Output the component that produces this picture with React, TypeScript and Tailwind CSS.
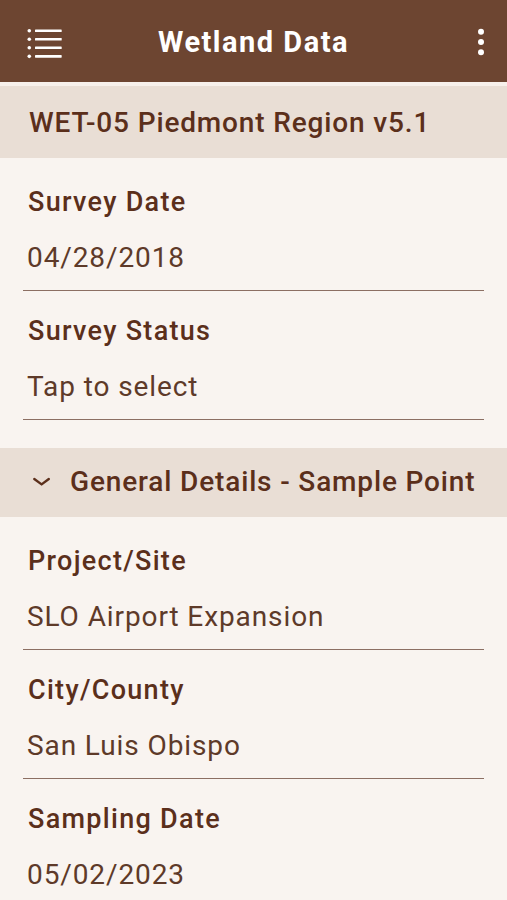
import React from "react";

function MenuIcon() {
  return (
    <svg width="40" height="34" viewBox="0 0 40 34" className="block">
      {[0, 1, 2, 3].map((i) => (
        <g key={i}>
          <circle cx="3.3" cy={4.7 + i * 8.55} r="1.8" fill="#ffffff" />
          <rect x="9" y={3.4 + i * 8.55} width="26.7" height="2.6" rx="0.6" fill="#ffffff" />
        </g>
      ))}
    </svg>
  );
}

function KebabIcon() {
  return (
    <svg width="12" height="34" viewBox="0 0 12 34" className="block">
      <circle cx="6" cy="5.7" r="3" fill="#ffffff" />
      <circle cx="6" cy="16" r="3" fill="#ffffff" />
      <circle cx="6" cy="26.3" r="3" fill="#ffffff" />
    </svg>
  );
}

function Chevron() {
  return (
    <svg width="20" height="12" viewBox="0 0 20 12" className="block">
      <polyline
        points="2.3,3 9.6,8.4 16.8,3"
        fill="none"
        stroke="#5b2f1b"
        strokeWidth="2.4"
        strokeLinecap="round"
        strokeLinejoin="round"
      />
    </svg>
  );
}

function Field({
  label,
  value,
  first,
  last,
}: {
  label: string;
  value: string;
  first?: boolean;
  last?: boolean;
}) {
  return (
    <div
      className={`mx-[23px] pl-[5px] ${first ? "pt-[28px]" : "pt-[24px]"} ${
        last ? "" : "pb-[15px] border-b-[1.5px] border-[#8c6f63]"
      }`}
    >
      <div className="text-[27px] leading-[32px] font-medium tracking-[1.3px] text-[#5b2f1b]">{label}</div>
      <div className="mt-[23px] text-[28px] leading-[34px] font-normal tracking-[0.9px] text-[#5e3a29] -ml-[1px]">
        {value}
      </div>
    </div>
  );
}

export default function App() {
  return (
    <div
      className="w-[507px] h-[900px] overflow-hidden bg-[#f9f4f0]"
      style={{ fontFamily: "Roboto, 'Noto Sans', sans-serif" }}
    >
      <header className="h-[82px] pt-[4px] bg-[#6d4531] flex items-center justify-between">
        <div className="w-[80px] pl-[26px]">
          <MenuIcon />
        </div>
        <h1 className="text-[29px] font-bold text-white tracking-[1.5px]">Wetland Data</h1>
        <div className="w-[80px] flex justify-end pr-[20px]">
          <KebabIcon />
        </div>
      </header>
      <div className="h-[4px] bg-[#f7f0eb]" />
      <div className="h-[72px] pt-[2px] bg-[#e9ded5] flex items-center pl-[29px]">
        <span className="text-[28px] font-medium tracking-[0.85px] text-[#5b2f1b]">
          WET-05 Piedmont Region v5.1
        </span>
      </div>
      <Field label="Survey Date" value="04/28/2018" first />
      <Field label="Survey Status" value="Tap to select" />
      <div className="h-[27.5px]" />
      <div className="h-[69px] bg-[#e9ded5] flex items-center pl-[32px] gap-[18px]">
        <Chevron />
        <span className="text-[28px] font-medium tracking-[0.85px] text-[#5b2f1b]">
          General Details - Sample Point
        </span>
      </div>
      <Field label="Project/Site" value="SLO Airport Expansion" first />
      <Field label="City/County" value="San Luis Obispo" />
      <Field label="Sampling Date" value="05/02/2023" last />
    </div>
  );
}
